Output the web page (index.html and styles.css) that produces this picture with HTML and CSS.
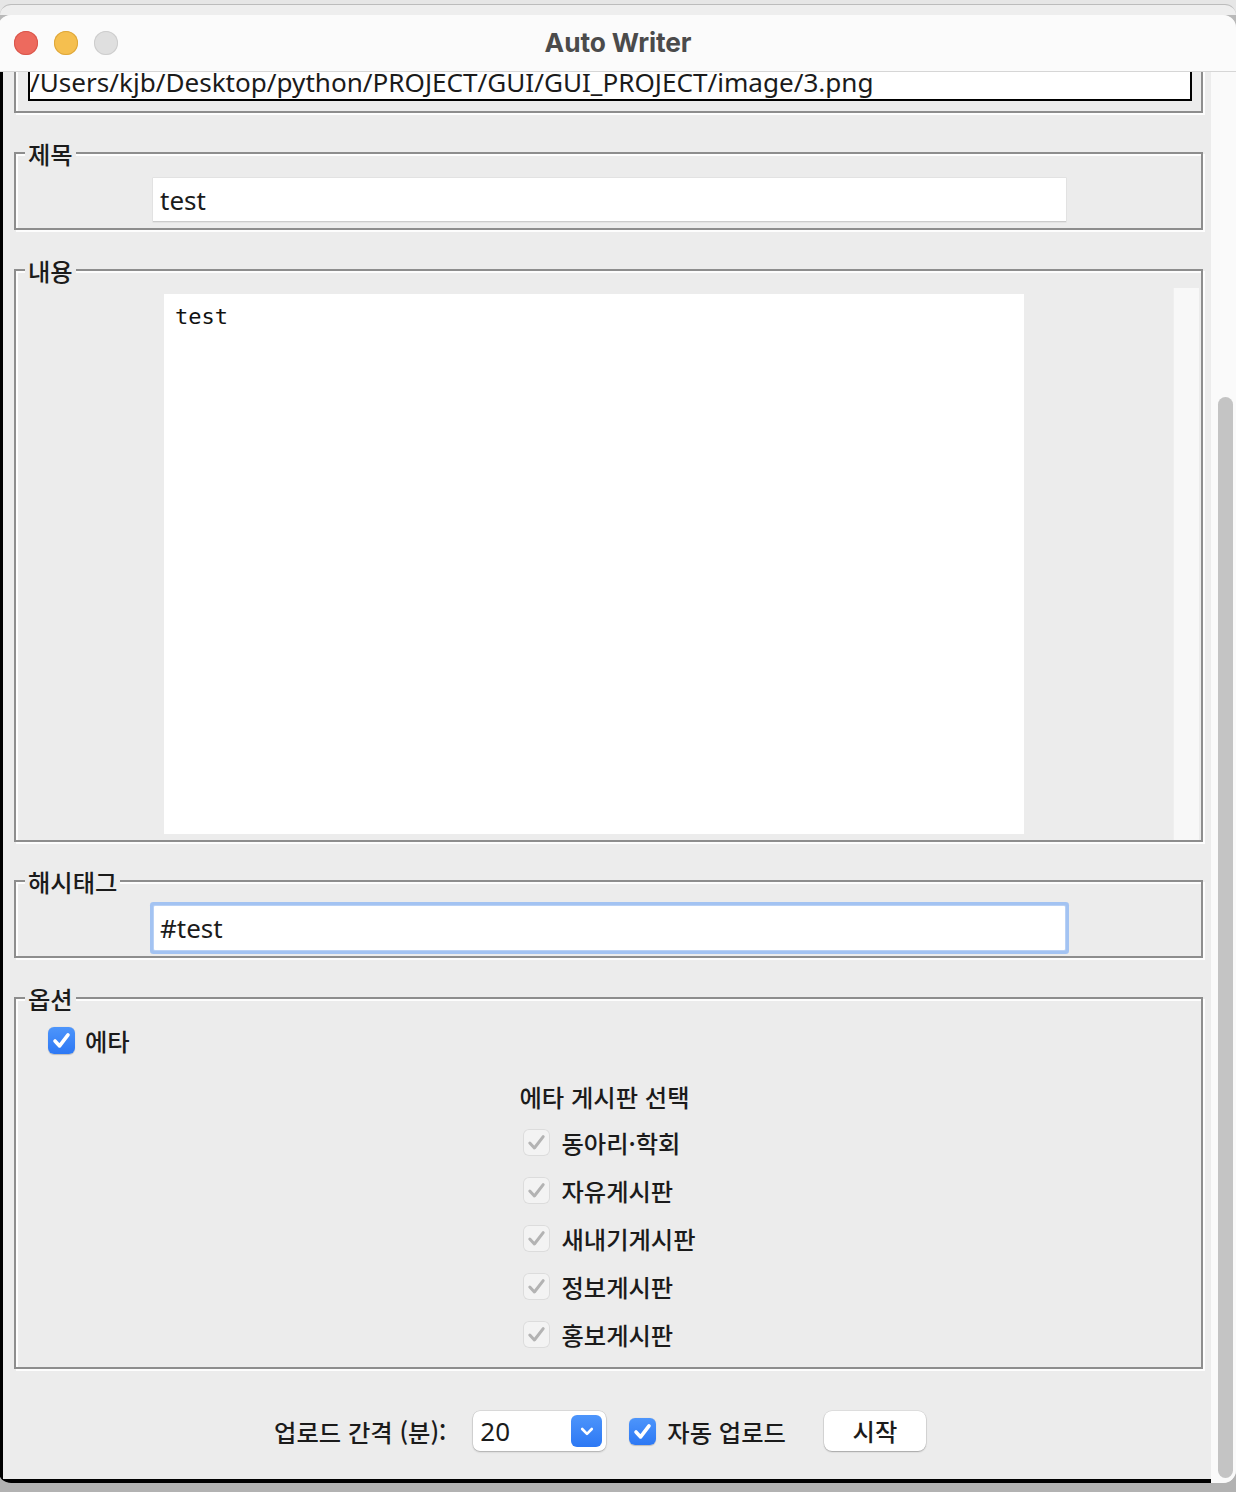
FILE: index.html
```html
<!DOCTYPE html>
<html lang="ko">
<head>
<meta charset="utf-8">
<title>Auto Writer</title>
<link rel="stylesheet" href="styles.css">
</head>
<body>
<div class="desk">
  <div class="backwin"></div>
  <div class="window">
    <div class="titlebar">
      <div class="lights">
        <span class="light red"></span>
        <span class="light yellow"></span>
        <span class="light grey"></span>
      </div>
      <div class="title">Auto Writer</div>
      <div></div>
    </div>
    <div class="body">
      <div class="content">
        <div class="group g-path">
          <div class="path-entry">/Users/kjb/Desktop/python/PROJECT/GUI/GUI_PROJECT/image/3.png</div>
        </div>

        <div class="group g-title">
          <span class="legend">제목</span>
          <div class="entry">test</div>
        </div>

        <div class="group g-body">
          <span class="legend">내용</span>
          <div class="text-row">
            <div class="textarea">test</div>
            <div class="tscroll"></div>
          </div>
        </div>

        <div class="group g-tag">
          <span class="legend">해시태그</span>
          <div class="entry focus">#test</div>
        </div>

        <div class="group g-opt">
          <span class="legend">옵션</span>
          <div class="eta-row">
            <span class="cb on"><svg viewBox="0 0 27 27" width="27" height="27"><path d="M7 14 L11.6 18.9 L20 7.9" fill="none" stroke="#fff" stroke-width="3.6" stroke-linecap="round" stroke-linejoin="round"/></svg></span>
            <span class="kr">에타</span>
          </div>
          <div class="board">
            <div class="board-title">에타 게시판 선택</div>
            <div class="board-row"><span class="cb off"><svg viewBox="0 0 27 27" width="27" height="27"><path d="M6.8 14 L11.4 19 L20.2 7.6" fill="none" stroke="#b3b3b3" stroke-width="3" stroke-linecap="round" stroke-linejoin="round"/></svg></span><span class="kr">동아리·학회</span></div>
            <div class="board-row"><span class="cb off"><svg viewBox="0 0 27 27" width="27" height="27"><path d="M6.8 14 L11.4 19 L20.2 7.6" fill="none" stroke="#b3b3b3" stroke-width="3" stroke-linecap="round" stroke-linejoin="round"/></svg></span><span class="kr">자유게시판</span></div>
            <div class="board-row"><span class="cb off"><svg viewBox="0 0 27 27" width="27" height="27"><path d="M6.8 14 L11.4 19 L20.2 7.6" fill="none" stroke="#b3b3b3" stroke-width="3" stroke-linecap="round" stroke-linejoin="round"/></svg></span><span class="kr">새내기게시판</span></div>
            <div class="board-row"><span class="cb off"><svg viewBox="0 0 27 27" width="27" height="27"><path d="M6.8 14 L11.4 19 L20.2 7.6" fill="none" stroke="#b3b3b3" stroke-width="3" stroke-linecap="round" stroke-linejoin="round"/></svg></span><span class="kr">정보게시판</span></div>
            <div class="board-row"><span class="cb off"><svg viewBox="0 0 27 27" width="27" height="27"><path d="M6.8 14 L11.4 19 L20.2 7.6" fill="none" stroke="#b3b3b3" stroke-width="3" stroke-linecap="round" stroke-linejoin="round"/></svg></span><span class="kr">홍보게시판</span></div>
          </div>
        </div>

        <div class="bottom-row">
          <span class="kr interval-label">업로드 간격 (분):</span>
          <div class="combo">
            <span class="combo-value">20</span>
            <span class="combo-btn"><svg viewBox="0 0 14 9" width="14" height="9"><path d="M2.2 2 L7 6.8 L11.8 2" fill="none" stroke="#fff" stroke-width="2.6" stroke-linecap="round" stroke-linejoin="round"/></svg></span>
          </div>
          <span class="cb on auto-cb"><svg viewBox="0 0 27 27" width="27" height="27"><path d="M7 14 L11.6 18.9 L20 7.9" fill="none" stroke="#fff" stroke-width="3.6" stroke-linecap="round" stroke-linejoin="round"/></svg></span>
          <span class="kr auto-label">자동 업로드</span>
          <button class="start-btn kr" type="button">시작</button>
        </div>
      </div>
      <div class="vscroll"><div class="thumb"></div></div>
    </div>
  </div>
</div>
</body>
</html>
```

FILE: styles.css
```css
* { box-sizing: border-box; }

html, body {
  margin: 0;
  padding: 0;
}

body {
  background: #b7b7b7;
  font-family: "Noto Sans", "Noto Sans CJK KR", sans-serif;
  color: #1b1b1b;
}

.desk {
  width: 1236px;
  height: 1492px;
  overflow: hidden;
  background: linear-gradient(to bottom, #e6e6e6 0, #e6e6e6 15px, #b9b9b9 15px, #b2b2b2 100%);
}

.backwin {
  height: 11px;
  margin-top: 4px;
  border-top: 1px solid #bcbcbc;
  border-radius: 12px 12px 0 0;
  background: #eeeeee;
}

.window {
  height: 1468px;
  margin-left: -2px;
  border-radius: 13px;
  overflow: hidden;
  background: #ececec;
  display: flex;
  flex-direction: column;
  width: 1238px;
}

.titlebar {
  height: 57px;
  flex: none;
  background: #fbfbfb;
  border-bottom: 1px solid #d6d6d6;
  display: grid;
  grid-template-columns: 1fr auto 1fr;
  align-items: center;
}

.lights {
  display: flex;
  gap: 16px;
  padding-left: 16px;
  padding-bottom: 1px;
}

.light {
  width: 24px;
  height: 24px;
  border-radius: 50%;
  display: block;
}
.light.red { background: #ed6a5e; box-shadow: inset 0 0 0 1px #d9574c; }
.light.yellow { background: #f5bf4f; box-shadow: inset 0 0 0 1px #dea73b; }
.light.grey { background: #dfdfdf; box-shadow: inset 0 0 0 1px #cdcdcd; }

.title {
  font-family: "Inter", "Liberation Sans", sans-serif;
  font-weight: 700;
  font-size: 26.3px;
  color: #4b4b4b;
  padding-bottom: 1px;
  padding-left: 2px;
  letter-spacing: -0.1px;
}

.body {
  flex: 1;
  display: flex;
  min-height: 0;
}

.content {
  flex: 1;
  overflow: hidden;
  border-left: 3px solid #000;
  border-bottom: 4px solid #000;
  background: #ececec;
  margin-left: 2px;
}

.vscroll {
  width: 25px;
  flex: none;
  background: #fafafa;
  padding-left: 7px;
  padding-top: 325px;
}

.thumb {
  width: 15px;
  height: 1081px;
  border-radius: 8px;
  background: #c4c4c4;
}

/* groove frames */
.group {
  position: relative;
  margin-left: 11px;
  width: 1189px;
  border: 2px solid #8d8d8d;
  box-shadow: inset 2px 2px 0 #fdfdfd, 2px 2px 0 #fdfdfd;
}

.legend {
  position: absolute;
  left: 9px;
  top: -13px;
  padding: 0 3px;
  background: #ececec;
  font-family: "Noto Sans CJK KR", sans-serif;
  font-size: 24.3px;
  font-weight: 500;
  line-height: 26px;
  color: #1b1b1b;
}

.kr {
  font-family: "Noto Sans CJK KR", sans-serif;
  font-size: 24.3px;
  font-weight: 500;
  color: #1b1b1b;
}

.g-path {
  margin-top: -27px;
  padding: 8px 9px 10px 12px;
}

.path-entry {
  width: 1164px;
  height: 46px;
  border: 2px solid #000;
  background: #fff;
  padding: 9px 0 0 0;
  font-size: 26.1px;
  line-height: 33px;
  white-space: nowrap;
  overflow: hidden;
}

.g-title {
  margin-top: 39px;
  padding: 24px 0 6px 137px;
}

.entry {
  width: 913px;
  height: 44px;
  background: #fff;
  font-size: 26px;
  line-height: 44px;
  padding-left: 7px;
  box-shadow: inset 0 -1px 0 #cbcbcb, 0 0 0 0.5px #d8d8d8;
}

.g-body {
  margin-top: 39px;
  padding: 17px 2px 0 148px;
}

.text-row {
  height: 552px;
  display: flex;
  align-items: center;
}

.textarea {
  width: 860px;
  height: 540px;
  background: #fff;
  font-family: "DejaVu Sans Mono", monospace;
  font-size: 22px;
  line-height: 30px;
  padding: 8px 11px;
  color: #111;
}

.tscroll {
  margin-left: auto;
  width: 26px;
  height: 552px;
  background: #f8f8f8;
  border-left: 1px solid #efefef;
}

.g-tag {
  margin-top: 38px;
  padding: 24px 0 6px 138px;
}

.entry.focus {
  width: 911px;
  border-radius: 1px;
  padding-left: 6px;
  box-shadow: 0 0 0 1px #b9d1f5, 0 0 0 4px #a3c3f2;
}

.g-opt {
  margin-top: 39px;
  padding: 0 0 9px 0;
  display: flex;
  flex-direction: column;
}

.eta-row {
  margin-top: 24px;
  height: 34px;
  display: flex;
  align-items: center;
  gap: 10px;
  padding-left: 32px;
}

.cb {
  width: 27px;
  height: 27px;
  border-radius: 6px;
  display: block;
  flex: none;
}
.cb svg { display: block; }

.cb.on {
  background: linear-gradient(to bottom, #4d95fb, #2d78f4);
  box-shadow: 0 0.5px 1px rgba(0, 0, 0, 0.2);
}

.cb.off {
  background: #f3f3f3;
  box-shadow: inset 0 0 0 1px #dcdcdc;
}

.board {
  align-self: center;
  margin-top: 23px;
  display: flex;
  flex-direction: column;
  margin-right: 2px;
}

.board-title {
  font-family: "Noto Sans CJK KR", sans-serif;
  font-size: 24.3px;
  font-weight: 500;
  line-height: 34px;
  margin-bottom: 4px;
}

.board-row {
  height: 48px;
  display: flex;
  align-items: center;
  gap: 11px;
  padding-left: 4px;
}

.bottom-row {
  margin-top: 39px;
  height: 46px;
  display: flex;
  align-items: center;
  justify-content: center;
  padding-right: 14px;
}

.interval-label {
  margin-right: 27px;
}

.combo {
  width: 133px;
  height: 40px;
  border-radius: 7px;
  background: #fff;
  box-shadow: 0 0 0 0.5px rgba(0, 0, 0, 0.14), 0 1px 2px rgba(0, 0, 0, 0.22);
  display: flex;
  align-items: center;
  padding-left: 7px;
}

.combo-value {
  font-size: 26px;
  line-height: 40px;
  color: #1b1b1b;
}

.combo-btn {
  margin-left: auto;
  margin-right: 4px;
  width: 31px;
  height: 32px;
  border-radius: 6px;
  background: linear-gradient(to bottom, #4d95fb, #2d78f4);
  display: flex;
  align-items: center;
  justify-content: center;
}
.combo-btn svg { display: block; }

.auto-cb {
  margin-left: 23px;
}

.auto-label {
  margin-left: 11px;
}

.start-btn {
  margin-left: 38px;
  width: 102px;
  height: 40px;
  border: none;
  border-radius: 8px;
  background: #fff;
  box-shadow: 0 0 0 0.5px rgba(0, 0, 0, 0.12), 0 1px 1.5px rgba(0, 0, 0, 0.25);
  padding: 0;
  line-height: 40px;
  text-align: center;
}
```
